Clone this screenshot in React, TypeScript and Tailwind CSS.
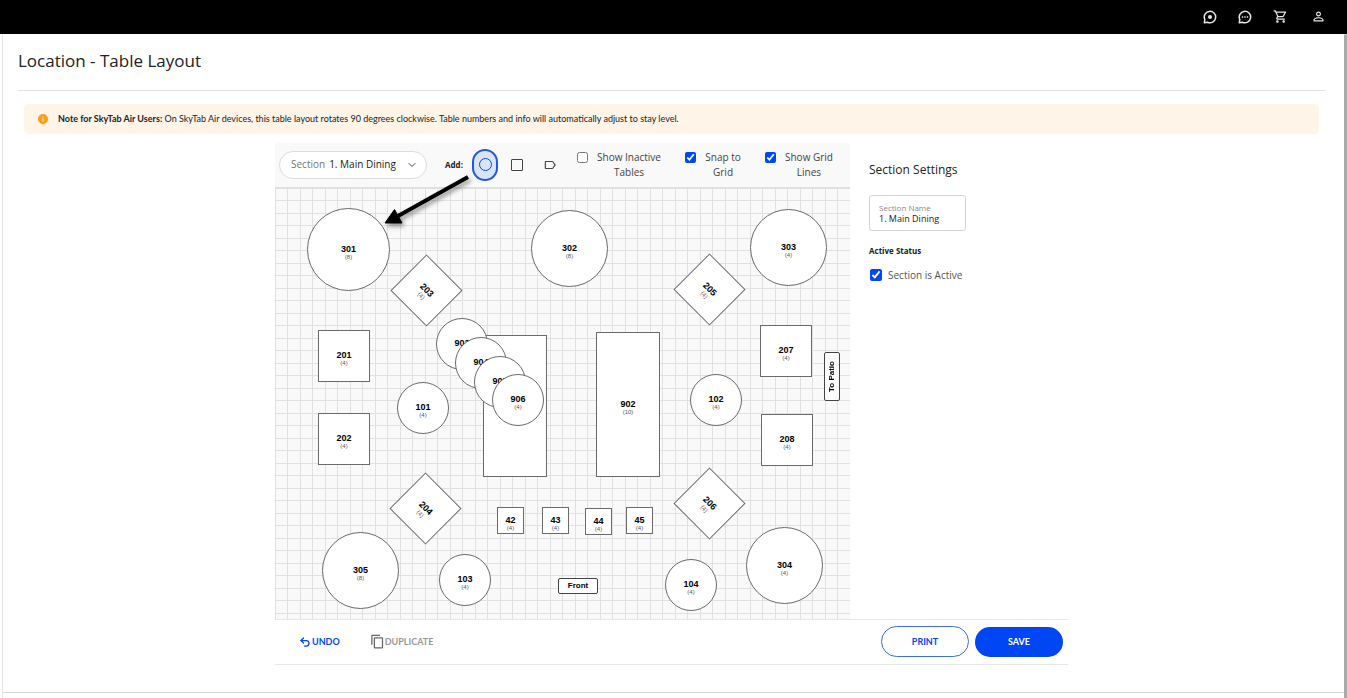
import React, { useState } from 'react';
import { MdOutlineShoppingCart, MdPersonOutline, MdLabelOutline, MdOutlineContentCopy, MdInfo } from 'react-icons/md';
import { ChevronDown, Undo2 } from 'lucide-react';

interface TableItem {
  label: string;
  seats?: number;
  shape: 'circle' | 'square' | 'diamond';
  x: number;
  y: number;
  w: number;
  h: number;
}

// positions are relative to the floor canvas
const TABLES: TableItem[] = [
  { label: '301', seats: 8, shape: 'circle', x: 32, y: 20, w: 83, h: 83 },
  { label: '302', seats: 8, shape: 'circle', x: 256, y: 22, w: 77, h: 77 },
  { label: '303', seats: 4, shape: 'circle', x: 475, y: 21, w: 77, h: 77 },
  { label: '203', seats: 4, shape: 'diamond', x: 126, y: 77, w: 51, h: 51 },
  { label: '205', seats: 4, shape: 'diamond', x: 409, y: 76, w: 51, h: 51 },
  { label: '201', seats: 4, shape: 'square', x: 43, y: 142, w: 52, h: 52 },
  { label: '202', seats: 4, shape: 'square', x: 43, y: 225, w: 52, h: 52 },
  { label: '101', seats: 4, shape: 'circle', x: 122, y: 194, w: 52, h: 52 },
  { label: '', shape: 'square', x: 208, y: 147, w: 64, h: 142 },
  { label: '903', seats: 4, shape: 'circle', x: 161, y: 130, w: 52, h: 52 },
  { label: '904', seats: 4, shape: 'circle', x: 180, y: 149, w: 52, h: 52 },
  { label: '905', seats: 4, shape: 'circle', x: 199, y: 168, w: 52, h: 52 },
  { label: '906', seats: 4, shape: 'circle', x: 217, y: 186, w: 52, h: 52 },
  { label: '902', seats: 10, shape: 'square', x: 321, y: 144, w: 64, h: 145 },
  { label: '102', seats: 4, shape: 'circle', x: 415, y: 186, w: 52, h: 52 },
  { label: '207', seats: 4, shape: 'square', x: 485, y: 137, w: 52, h: 52 },
  { label: '208', seats: 4, shape: 'square', x: 486, y: 226, w: 52, h: 52 },
  { label: '204', seats: 4, shape: 'diamond', x: 125, y: 295, w: 51, h: 51 },
  { label: '206', seats: 4, shape: 'diamond', x: 409, y: 290, w: 51, h: 51 },
  { label: '42', seats: 4, shape: 'square', x: 222, y: 319, w: 27, h: 27 },
  { label: '43', seats: 4, shape: 'square', x: 267, y: 319, w: 27, h: 27 },
  { label: '44', seats: 4, shape: 'square', x: 310, y: 320, w: 27, h: 27 },
  { label: '45', seats: 4, shape: 'square', x: 351, y: 319, w: 27, h: 27 },
  { label: '305', seats: 8, shape: 'circle', x: 47, y: 344, w: 77, h: 77 },
  { label: '304', seats: 4, shape: 'circle', x: 471, y: 339, w: 77, h: 77 },
  { label: '103', seats: 4, shape: 'circle', x: 164, y: 366, w: 52, h: 52 },
  { label: '104', seats: 4, shape: 'circle', x: 390, y: 371, w: 52, h: 52 },
];

const SHAPES = {
  circle: 'rounded-full',
  square: '',
  diamond: 'rotate-45',
};

function FloorTable({ table }: { table: TableItem }) {
  return (
    <div
      className={`absolute flex flex-col items-center justify-center border border-[#6a6a6a] bg-white pt-1.5 font-['Liberation_Sans',sans-serif] ${SHAPES[table.shape]}`}
      style={{ left: table.x, top: table.y, width: table.w, height: table.h }}
    >
      <span className="text-[9px] leading-2 font-bold text-black">{table.label}</span>
      {table.seats && <span className="text-[6px] leading-2 text-[#555]">({table.seats})</span>}
    </div>
  );
}

function ToolbarCheck({ label, width, defaultChecked }: { label: string; width: string; defaultChecked?: boolean }) {
  return (
    <label className="flex items-start gap-2">
      <input type="checkbox" defaultChecked={defaultChecked} className="mt-0.5 size-[11px] shrink-0 accent-[#0046ff]" />
      <span className={`text-center text-[10px] leading-[15px] text-[#444] ${width}`}>{label}</span>
    </label>
  );
}

export default function App() {
  const [sectionName, setSectionName] = useState('1. Main Dining');

  return (
    <div className="flex min-h-screen flex-col bg-white font-['Open_Sans','Noto_Sans',sans-serif] text-[#222]">
      <header className="flex h-[34px] items-center justify-end gap-[21px] bg-black pr-[21px] pb-px text-[#e6e6e6]">
        <button aria-label="Activity">
          <svg width="14" height="14" viewBox="0 0 14 14" fill="none" stroke="currentColor" strokeWidth="1.5">
            <path d="M1.300 12.700 1.800 9.500A5.700 5.700 0 1 1 4.500 12.200Z" strokeLinejoin="round" />
            <circle cx="7" cy="7" r="2" fill="currentColor" stroke="none" />
          </svg>
        </button>
        <button aria-label="Messages">
          <svg width="14" height="14" viewBox="0 0 14 14" fill="none" stroke="currentColor" strokeWidth="1.5">
            <path d="M1.300 12.700 1.800 9.500A5.700 5.700 0 1 1 4.500 12.200Z" strokeLinejoin="round" />
            <path d="M3.800 7h1.400M6.300 7h1.400M8.800 7h1.400" />
          </svg>
        </button>
        <button aria-label="Cart"><MdOutlineShoppingCart size={15} /></button>
        <button aria-label="Account" className="pl-0.5"><MdPersonOutline size={15} /></button>
      </header>

      <div className="flex flex-1">
        <div className="w-[3px] border-r border-[#e4e4e4]" />

        <div className="flex min-w-0 flex-1 flex-col">
          <main className="flex-1 pr-[19px] pl-[15px]">
            <h1 className="border-b border-[#e2e2e2] pt-3.5 pb-4 text-[17px] leading-[26px]">Location - Table Layout</h1>

            <div className="mx-1.5 mt-[13px] mb-[9px] flex h-[30px] items-center gap-[9px] rounded-sm bg-[#fff4e8] px-[13px] font-[Lato,sans-serif] text-[9px]">
              <MdInfo size={12} className="shrink-0 text-[#f99d1c]" />
              <p><b>Note for SkyTab Air Users:</b> On SkyTab Air devices, this table layout rotates 90 degrees clockwise. Table numbers and info will automatically adjust to stay level.</p>
            </div>

            <div className="mx-auto max-w-[793px]">
              <div className="flex">
                <div className="relative min-w-[575px] flex-1">
                  <div className="flex h-[45px] items-center border-b border-[#dedede] bg-[#f9f9f9] pr-3 pb-px pl-1">
                    <label className="relative flex h-7 w-[148px] items-center rounded-full border border-[#dcdcdc] bg-white pl-[11px] text-[10px] text-[#777]">
                      Section
                      <select className="h-full min-w-0 flex-1 appearance-none pl-1 text-[#222] outline-none">
                        <option>1. Main Dining</option>
                      </select>
                      <ChevronDown size={12} className="pointer-events-none absolute right-2 text-[#444]" />
                    </label>
                    <span className="ml-[18px] w-[19px] text-[8px] font-bold whitespace-nowrap">Add:</span>
                    <div className="ml-2 flex items-center text-[#444]">
                      <button aria-label="Round table" className="flex h-8 w-[26px] items-center justify-center rounded-full border-2 border-[#2358d8] bg-[#d9e4fb]">
                        <span className="size-[13px] rounded-full border border-[#0046ff]" />
                      </button>
                      <button aria-label="Square table" className="ml-[13px] size-3 rounded-[1px] border border-[#444]" />
                      <button aria-label="Label" className="ml-5"><MdLabelOutline size={14} /></button>
                    </div>
                    <div className="ml-5 flex gap-[23px]">
                      <ToolbarCheck label="Show Inactive Tables" width="w-[66px]" />
                      <ToolbarCheck label="Snap to Grid" width="w-[38px]" defaultChecked />
                      <ToolbarCheck label="Show Grid Lines" width="w-[50px]" defaultChecked />
                    </div>
                  </div>

                  <div className="relative h-[431px] overflow-hidden bg-[#f9f9f9] bg-[linear-gradient(to_right,#e1e1e1_1px,transparent_1px,transparent_12px,#e1e1e1_12px,#e1e1e1_13px,transparent_13px),linear-gradient(to_bottom,#e1e1e1_1px,transparent_1px,transparent_12px,#e1e1e1_12px,#e1e1e1_13px,transparent_13px)] bg-[size:25px_25px]">
                    {TABLES.map((t, i) => <FloorTable key={i} table={t} />)}
                    <div className="absolute top-[390px] left-[283px] flex h-4 w-10 items-center justify-center rounded-xs border border-[#444] bg-white font-['Liberation_Sans',sans-serif] text-[8px] font-bold text-black">Front</div>
                    <div className="absolute top-[164px] left-[549px] flex h-[49px] w-4 rotate-180 items-center justify-center rounded-xs border border-[#444] bg-white font-['Liberation_Sans',sans-serif] text-[8px] font-bold whitespace-nowrap text-black [writing-mode:vertical-rl]">To Patio</div>
                  </div>

                  <svg className="pointer-events-none absolute top-6 left-[104px] drop-shadow-[2px_3px_2px_rgba(0,0,0,0.4)]" width="96" height="64" viewBox="0 0 96 64">
                    <path d="M89 10 19 49" stroke="#000" strokeWidth="4" />
                    <path d="M6 56 15.500 42.500 23 56Z" fill="#000" stroke="#000" />
                  </svg>
                </div>

                <aside className="w-[218px] pt-[17px] pl-[19px]">
                  <h2 className="text-[12px] leading-5">Section Settings</h2>
                  <label className="mt-[15px] flex h-9 w-[97px] flex-col justify-center rounded-[3px] border border-[#d4d4d4] px-[9px] text-[8px] leading-[11px] text-[#888]">
                    Section Name
                    <input value={sectionName} onChange={(e) => setSectionName(e.target.value)} className="w-full text-[9px] leading-3 text-[#222] outline-none" />
                  </label>
                  <h3 className="mt-3 text-[8px] leading-4 font-bold">Active Status</h3>
                  <label className="mt-2 flex items-center gap-1.5 pl-px text-[10px] leading-4 text-[#555]">
                    <input type="checkbox" defaultChecked className="size-3 accent-[#0046ff]" />
                    Section is Active
                  </label>
                </aside>
              </div>

              <div className="flex h-[46px] items-center border-y border-[#e6e6e6] pr-[5px] pb-px pl-6 font-[Lato,sans-serif] text-[9px] font-bold">
                <button className="flex items-center gap-px text-[#0046ff]"><Undo2 size={12} strokeWidth={2.5} /> UNDO</button>
                <button className="ml-[30px] flex items-center text-[#999]"><MdOutlineContentCopy size={15} className="text-[#666]" />DUPLICATE</button>
                <button className="ml-auto h-[31px] w-[88px] rounded-full border border-[#3b6cf6] text-[#0046ff]">PRINT</button>
                <button className="ml-1.5 h-[30px] w-[88px] rounded-full bg-[#0046f5] text-white">SAVE</button>
              </div>
            </div>
          </main>
          <footer className="h-1.5 border-t border-[#d8d8d8]" />
        </div>

        <div className="w-[3px] rounded-t-full bg-[#aaa]" />
      </div>
    </div>
  );
}
